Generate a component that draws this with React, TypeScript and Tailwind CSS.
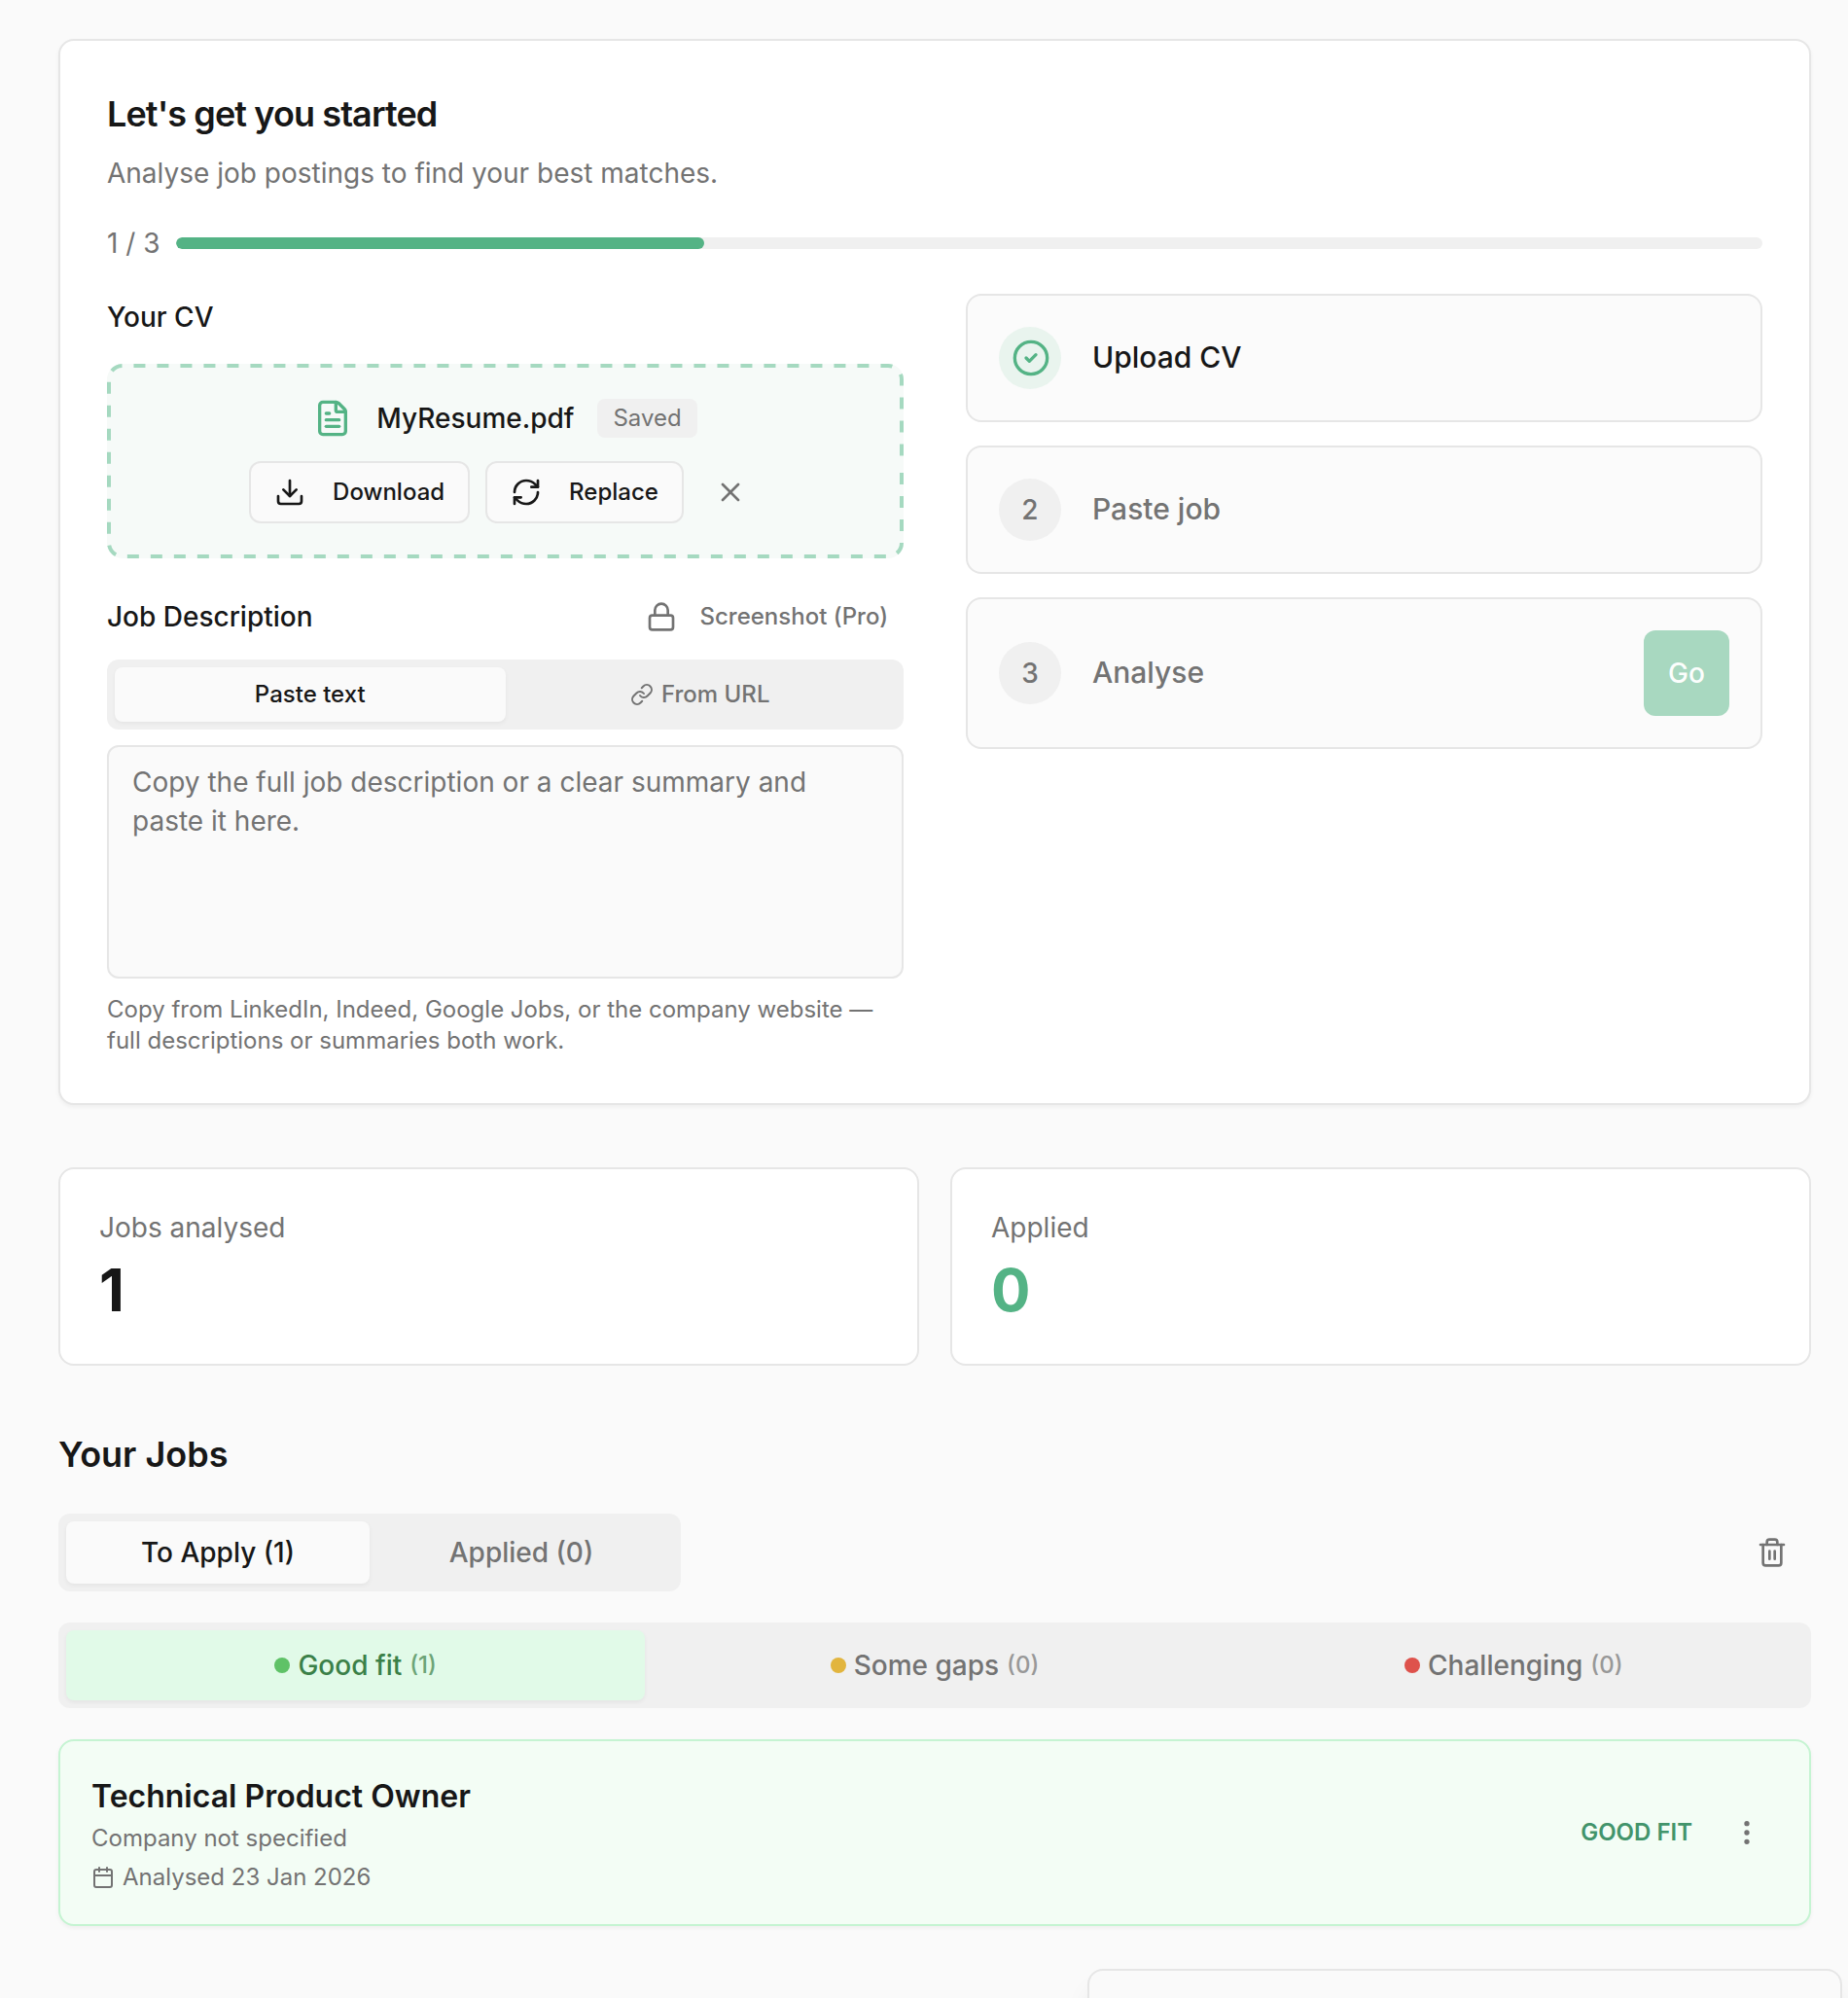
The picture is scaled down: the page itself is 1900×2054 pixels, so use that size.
import {
  Calendar,
  CircleCheck,
  Download,
  EllipsisVertical,
  FileText,
  Link,
  Lock,
  RefreshCw,
  Trash2,
  X,
} from "lucide-react";

const steps = [
  { label: "Upload CV", done: true },
  { label: "Paste job", done: false },
  { label: "Analyse", done: false, action: "Go" },
];

const stats = [
  { label: "Jobs analysed", value: 1, color: "text-[#171717]" },
  { label: "Applied", value: 0, color: "text-[#54b385]" },
];

const fits = [
  { label: "Good fit", count: 1, dot: "bg-[#5fc267]", active: true },
  { label: "Some gaps", count: 0, dot: "bg-[#e2b53e]", active: false },
  { label: "Challenging", count: 0, dot: "bg-[#de524c]", active: false },
];

// even 12px dashes, the css dashed border is too dense at this width
const DashedOutline = () => {
  return (
    <svg
      className="absolute inset-0 w-full h-full text-[#a5d9c0]"
      viewBox="0 0 819 200"
      fill="none"
      stroke="currentColor"
      strokeWidth={4}
      strokeDasharray="12 12"
    >
      <path d="M817 112V184a14 14 0 0 1-14 14H16a14 14 0 0 1-14-14V16a14 14 0 0 1 14-14H803a14 14 0 0 1 14 14V105" />
    </svg>
  );
};

const CvBox = () => {
  return (
    <div className="relative h-[200px] rounded-2xl bg-[#f6faf8] p-9 flex flex-col items-center gap-6">
      <DashedOutline />
      <div className="flex items-center gap-6 h-10">
        <FileText className="size-10 mr-px text-[#54b385]" />
        <span className="text-[28px] font-medium leading-10">MyResume.pdf</span>
        <span className="bg-[#f0f0f0] text-[#737373] text-2xl leading-8 px-4 py-1 rounded-lg">
          Saved
        </span>
      </div>
      <div className="flex items-center gap-4 h-16">
        <button className="h-16 px-6 flex items-center gap-7 border-2 border-[#e6e6e6] bg-[#fafafa] rounded-xl text-2xl font-medium">
          <Download className="size-8" />
          Download
        </button>
        <button className="h-16 px-6 flex items-center gap-7 border-2 border-[#e6e6e6] bg-[#fafafa] rounded-xl text-2xl font-medium">
          <RefreshCw className="size-8" />
          Replace
        </button>
        <button className="size-16 flex items-center justify-center text-[#737373]">
          <X className="size-8" />
        </button>
      </div>
    </div>
  );
};

const JobDescription = () => {
  return (
    <div className="mt-8">
      <div className="flex items-center justify-between h-14 mb-4">
        <span className="text-[28px] font-medium">Job Description</span>
        <button className="flex items-center gap-[23px] px-4 text-2xl font-medium text-[#737373]">
          <Lock className="size-8" />
          Screenshot (Pro)
        </button>
      </div>
      <div className="grid grid-cols-2 h-[72px] p-2 rounded-xl bg-[#f0f0f0] text-2xl font-medium">
        <button className="rounded-lg bg-[#fafafa] shadow-[0_2px_4px_rgba(0,0,0,0.05)]">
          Paste text
        </button>
        <button className="flex items-center justify-center gap-2 pr-px text-[#737373]">
          <Link className="size-6" />
          From URL
        </button>
      </div>
      <textarea
        className="block w-full h-60 mt-4 px-6 py-4 border-2 border-[#e6e6e6] rounded-xl bg-[#fafafa] text-[28px] leading-10 placeholder:text-[#737373] resize-none outline-none"
        placeholder="Copy the full job description or a clear summary and paste it here."
      />
      <p className="mt-4 text-2xl leading-8 text-[#737373]">
        Copy from LinkedIn, Indeed, Google Jobs, or the company website — full
        descriptions or summaries both work.
      </p>
    </div>
  );
};

const Steps = () => {
  return (
    <div className="flex flex-col gap-6">
      {steps.map((step, i) => (
        <div
          key={step.label}
          className="flex items-center gap-8 p-8 border-2 border-[#e6e6e6] rounded-2xl bg-[#fbfbfb]"
        >
          {step.done ? (
            <div className="size-16 rounded-full bg-[#e9f4ee] flex items-center justify-center">
              <CircleCheck className="size-10 ml-0.5 text-[#54b385]" />
            </div>
          ) : (
            <div className="size-16 rounded-full bg-[#f0f0f0] flex items-center justify-center text-[28px] font-medium text-[#737373]">
              {i + 1}
            </div>
          )}
          <span
            className={
              step.done
                ? "flex-1 pb-0.5 text-[30px] leading-10 font-medium"
                : "flex-1 pb-0.5 text-[30px] leading-10 font-medium text-[#737373]"
            }
          >
            {step.label}
          </span>
          {step.action && (
            <button className="size-[88px] rounded-xl bg-[#a8d8c0] text-[#fcfefd] text-[28px] font-medium">
              {step.action}
            </button>
          )}
        </div>
      ))}
    </div>
  );
};

const GetStarted = () => {
  return (
    <section className="bg-white border-2 border-[#e6e6e6] rounded-2xl p-12 shadow-[0_2px_4px_rgba(0,0,0,0.05)]">
      <h2 className="text-4xl leading-[54px] font-semibold tracking-tight">
        Let's get you started
      </h2>
      <p className="mt-3.5 text-[28px] leading-10 text-[#737373]">
        Analyse job postings to find your best matches.
      </p>
      <div className="flex items-center gap-4 h-10 mt-8 mb-8">
        <span className="text-[28px] text-[#737373] whitespace-nowrap">
          1 / 3
        </span>
        <div className="flex-1 h-3 rounded-full bg-[#f0f0f0] overflow-hidden">
          <div className="w-1/3 h-full rounded-full bg-[#54b385]" />
        </div>
      </div>
      <div className="grid grid-cols-2 gap-16">
        <div>
          <div className="text-[28px] leading-[48px] font-medium mb-6">
            Your CV
          </div>
          <CvBox />
          <JobDescription />
        </div>
        <Steps />
      </div>
    </section>
  );
};

const JobCard = () => {
  return (
    <div className="flex items-center justify-between h-48 mt-8 p-8 border-2 border-[#c5f4d2] rounded-2xl bg-[#f3fdf5] shadow-[0_2px_4px_rgba(0,0,0,0.05)]">
      <div>
        <h3 className="text-[32px] leading-[50px] font-semibold">
          Technical Product Owner
        </h3>
        <p className="mt-0.5 text-2xl leading-8 text-[#737373]">
          Company not specified
        </p>
        <p className="mt-2 flex items-center gap-2 text-2xl leading-8 text-[#737373]">
          <Calendar className="size-6" />
          Analysed 23 Jan 2026
        </p>
      </div>
      <div className="flex items-center gap-6">
        <span className="text-2xl font-semibold text-[#42946b]">GOOD FIT</span>
        <button className="size-16 flex items-center justify-center text-[#737373]">
          <EllipsisVertical className="size-8" />
        </button>
      </div>
    </div>
  );
};

const App = () => {
  return (
    <div className="relative h-[2054px] overflow-hidden bg-[#fafafa] pt-10 pl-[60px] pr-[38px] font-[Inter,sans-serif] text-[#171717]">
      <GetStarted />

      <div className="grid grid-cols-2 gap-8 mt-16">
        {stats.map((stat) => (
          <div
            key={stat.label}
            className="p-10 bg-white border-2 border-[#e6e6e6] rounded-2xl"
          >
            <div className="text-[28px] leading-10 text-[#737373]">
              {stat.label}
            </div>
            <div className={`mt-2 text-6xl leading-[72px] font-bold ${stat.color}`}>
              {stat.value}
            </div>
          </div>
        ))}
      </div>

      <h2 className="mt-16 mb-[34px] text-4xl leading-[54px] font-semibold">
        Your Jobs
      </h2>

      <div className="flex items-center justify-between">
        <div className="grid grid-cols-2 w-[640px] h-20 p-2 rounded-xl bg-[#f0f0f0] text-[28px] font-medium">
          <button className="rounded-lg bg-[#fafafa] shadow-[0_2px_4px_rgba(0,0,0,0.05)]">
            To Apply (1)
          </button>
          <button className="text-[#737373]">Applied (0)</button>
        </div>
        <button className="px-6 text-[#737373]">
          <Trash2 className="size-8" />
        </button>
      </div>

      <div className="grid grid-cols-3 h-[88px] mt-8 p-2 rounded-xl bg-[#f0f0f0] text-[28px] font-medium">
        {fits.map((fit) => (
          <button
            key={fit.label}
            className={
              fit.active
                ? "flex items-center justify-center gap-2 rounded-lg bg-[#e1fae8] text-[#3b8048] shadow-[0_2px_4px_rgba(0,0,0,0.05)]"
                : "flex items-center justify-center gap-2 text-[#737373]"
            }
          >
            <span className={`size-4 rounded-full ${fit.dot}`} />
            {fit.label}
            <span className="text-2xl opacity-70">({fit.count})</span>
          </button>
        ))}
      </div>

      <JobCard />

      {/* floating panel, only its top edge is in view */}
      <div className="absolute top-[2024px] right-1.5 w-[776px] h-40 border-2 border-[#e6e6e6] rounded-2xl bg-[#fafafa] shadow-[0_20px_30px_-6px_rgba(0,0,0,0.1)]" />
    </div>
  );
};
export default App;
